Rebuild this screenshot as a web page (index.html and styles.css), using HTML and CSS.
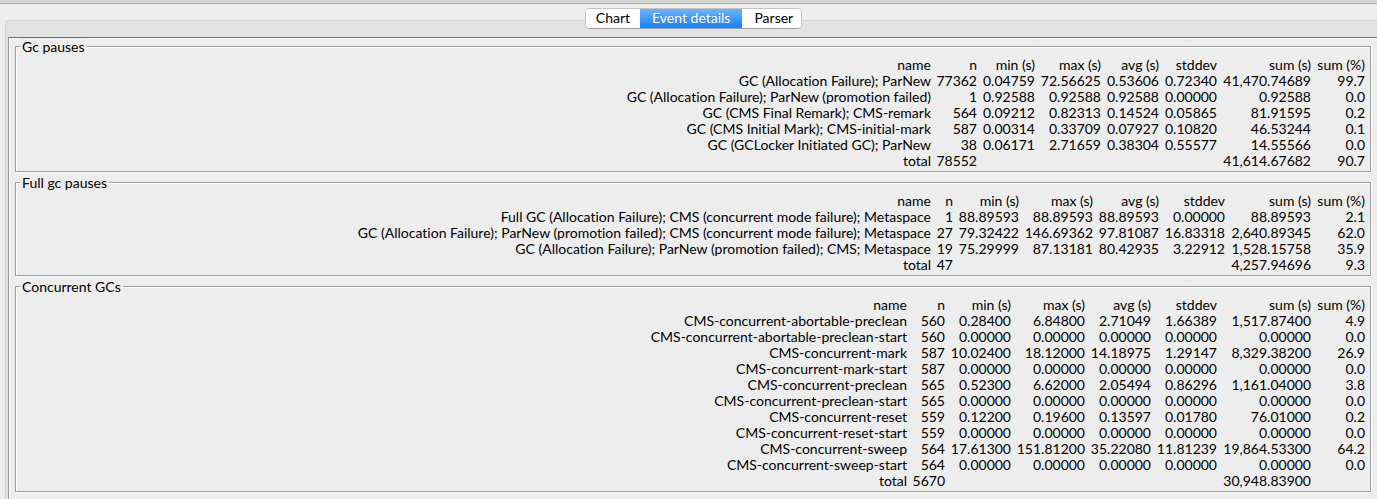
FILE: index.html
```html
<!DOCTYPE html>
<html lang="en">
<head>
<meta charset="utf-8">
<title>Event details</title>
<link rel="stylesheet" href="styles.css">
</head>
<body>
<div class="titlebar"></div>
<main class="window">
<nav class="tabs" role="tablist">
<button class="tab" role="tab">Chart</button>
<button class="tab selected" role="tab" aria-selected="true">Event details</button>
<button class="tab last" role="tab">Parser</button>
</nav>
<div class="pane">
<div class="content">
<fieldset class="group">
<legend>Gc pauses</legend>
<table class="stats">
<colgroup><col><col class="w46"><col class="w58"><col class="w66"><col class="w58"><col class="w58"><col class="w94"><col class="w54"></colgroup>
<thead><tr><th>name</th><th>n</th><th>min (s)</th><th>max (s)</th><th>avg (s)</th><th>stddev</th><th>sum (s)</th><th>sum (%)</th></tr></thead>
<tbody>
<tr><td>GC (Allocation Failure); ParNew</td><td>77362</td><td>0.04759</td><td>72.56625</td><td>0.53606</td><td>0.72340</td><td>41,470.74689</td><td>99.7</td></tr>
<tr><td>GC (Allocation Failure); ParNew (promotion failed)</td><td>1</td><td>0.92588</td><td>0.92588</td><td>0.92588</td><td>0.00000</td><td>0.92588</td><td>0.0</td></tr>
<tr><td>GC (CMS Final Remark); CMS-remark</td><td>564</td><td>0.09212</td><td>0.82313</td><td>0.14524</td><td>0.05865</td><td>81.91595</td><td>0.2</td></tr>
<tr><td>GC (CMS Initial Mark); CMS-initial-mark</td><td>587</td><td>0.00314</td><td>0.33709</td><td>0.07927</td><td>0.10820</td><td>46.53244</td><td>0.1</td></tr>
<tr><td>GC (GCLocker Initiated GC); ParNew</td><td>38</td><td>0.06171</td><td>2.71659</td><td>0.38304</td><td>0.55577</td><td>14.55566</td><td>0.0</td></tr>
<tr><td>total</td><td>78552</td><td></td><td></td><td></td><td></td><td>41,614.67682</td><td>90.7</td></tr>
</tbody>
</table>
</fieldset>
<fieldset class="group">
<legend>Full gc pauses</legend>
<table class="stats">
<colgroup><col><col class="w22"><col class="w66"><col class="w74"><col class="w66"><col class="w66"><col class="w86"><col class="w54"></colgroup>
<thead><tr><th>name</th><th>n</th><th>min (s)</th><th>max (s)</th><th>avg (s)</th><th>stddev</th><th>sum (s)</th><th>sum (%)</th></tr></thead>
<tbody>
<tr><td>Full GC (Allocation Failure); CMS (concurrent mode failure); Metaspace</td><td>1</td><td>88.89593</td><td>88.89593</td><td>88.89593</td><td>0.00000</td><td>88.89593</td><td>2.1</td></tr>
<tr><td>GC (Allocation Failure); ParNew (promotion failed); CMS (concurrent mode failure); Metaspace</td><td>27</td><td>79.32422</td><td>146.69362</td><td>97.81087</td><td>16.83318</td><td>2,640.89345</td><td>62.0</td></tr>
<tr><td>GC (Allocation Failure); ParNew (promotion failed); CMS; Metaspace</td><td>19</td><td>75.29999</td><td>87.13181</td><td>80.42935</td><td>3.22912</td><td>1,528.15758</td><td>35.9</td></tr>
<tr><td>total</td><td>47</td><td></td><td></td><td></td><td></td><td>4,257.94696</td><td>9.3</td></tr>
</tbody>
</table>
</fieldset>
<fieldset class="group">
<legend>Concurrent GCs</legend>
<table class="stats">
<colgroup><col><col class="w38"><col class="w66"><col class="w74"><col class="w66"><col class="w66"><col class="w94"><col class="w54"></colgroup>
<thead><tr><th>name</th><th>n</th><th>min (s)</th><th>max (s)</th><th>avg (s)</th><th>stddev</th><th>sum (s)</th><th>sum (%)</th></tr></thead>
<tbody>
<tr><td>CMS-concurrent-abortable-preclean</td><td>560</td><td>0.28400</td><td>6.84800</td><td>2.71049</td><td>1.66389</td><td>1,517.87400</td><td>4.9</td></tr>
<tr><td>CMS-concurrent-abortable-preclean-start</td><td>560</td><td>0.00000</td><td>0.00000</td><td>0.00000</td><td>0.00000</td><td>0.00000</td><td>0.0</td></tr>
<tr><td>CMS-concurrent-mark</td><td>587</td><td>10.02400</td><td>18.12000</td><td>14.18975</td><td>1.29147</td><td>8,329.38200</td><td>26.9</td></tr>
<tr><td>CMS-concurrent-mark-start</td><td>587</td><td>0.00000</td><td>0.00000</td><td>0.00000</td><td>0.00000</td><td>0.00000</td><td>0.0</td></tr>
<tr><td>CMS-concurrent-preclean</td><td>565</td><td>0.52300</td><td>6.62000</td><td>2.05494</td><td>0.86296</td><td>1,161.04000</td><td>3.8</td></tr>
<tr><td>CMS-concurrent-preclean-start</td><td>565</td><td>0.00000</td><td>0.00000</td><td>0.00000</td><td>0.00000</td><td>0.00000</td><td>0.0</td></tr>
<tr><td>CMS-concurrent-reset</td><td>559</td><td>0.12200</td><td>0.19600</td><td>0.13597</td><td>0.01780</td><td>76.01000</td><td>0.2</td></tr>
<tr><td>CMS-concurrent-reset-start</td><td>559</td><td>0.00000</td><td>0.00000</td><td>0.00000</td><td>0.00000</td><td>0.00000</td><td>0.0</td></tr>
<tr><td>CMS-concurrent-sweep</td><td>564</td><td>17.61300</td><td>151.81200</td><td>35.22080</td><td>11.81239</td><td>19,864.53300</td><td>64.2</td></tr>
<tr><td>CMS-concurrent-sweep-start</td><td>564</td><td>0.00000</td><td>0.00000</td><td>0.00000</td><td>0.00000</td><td>0.00000</td><td>0.0</td></tr>
<tr><td>total</td><td>5670</td><td></td><td></td><td></td><td></td><td>30,948.83900</td><td></td></tr>
</tbody>
</table>
</fieldset>
</div>
</div>
</main>
</body>
</html>
```
FILE: styles.css
```css
* { box-sizing: border-box; }
body {
  margin: 0;
  min-height: 100vh;
  display: flex;
  flex-direction: column;
  background: #ededed;
  color: #000;
  font: 14px/16px Lato, "Noto Sans", sans-serif;
  font-variant-ligatures: none;
  overflow-x: hidden;
}
.titlebar {
  height: 4px;
  background: #d6d6d6;
  border-bottom: 1px solid #ababab;
}
.window {
  flex: 1;
  display: flex;
  flex-direction: column;
  padding: 4px 0 0 5px;
}
.tabs {
  display: flex;
  align-self: center;
  height: 21px;
  margin: 0 0 -9px 5px;
  z-index: 1;
  border: 1px solid #c4c4c4;
  border-bottom-color: #a0a0a0;
  border-radius: 5px;
  overflow: hidden;
  background: #fff;
}
.tab {
  border: 0;
  padding: 0 10px 1px;
  background: #fff;
  color: #000;
  font: inherit;
}
.tab.selected {
  padding: 0 12px 1px;
  color: #fff;
  background: linear-gradient(#6db3fb, #1482fe);
  text-shadow: 0 1px 1px #4a7fb8;
}
.tab.last {
  padding: 0 8px 1px 12px;
}
.pane {
  flex: 1;
  display: flex;
  border: 1px solid #d2d2d2;
  border-width: 1px 0 0 1px;
  border-radius: 4px 0 0 0;
  background: #e3e3e3;
  padding: 16px 0 0 2px;
}
.content {
  flex: 1;
  min-width: 0;
  display: flex;
  flex-direction: column;
  gap: 2px;
  padding: 0 6px 7px;
  border-top: 1px solid #6b6b6b;
  border-left: 1px solid #999;
  background: #ededed;
  box-shadow: inset 1px 1px #fff;
}
.group {
  min-width: 0;
  margin: 0;
  padding: 3px 5px 2px;
  border: 1px solid #9e9e9e;
  box-shadow: 1px 1px #fff, inset 1px 1px #fff;
}
.group legend {
  margin-left: -1px;
  padding: 2px 2px 0;
  line-height: 14px;
  background: #ededed;
}
.stats {
  width: 100%;
  table-layout: fixed;
  border-collapse: collapse;
}
.stats th, .stats td {
  height: 16px;
  padding: 0;
  font-weight: 400;
  text-align: right;
  white-space: nowrap;
}
.w22 { width: 22px; }
.w38 { width: 38px; }
.w46 { width: 46px; }
.w54 { width: 54px; }
.w58 { width: 58px; }
.w66 { width: 66px; }
.w74 { width: 74px; }
.w86 { width: 86px; }
.w94 { width: 94px; }
```
